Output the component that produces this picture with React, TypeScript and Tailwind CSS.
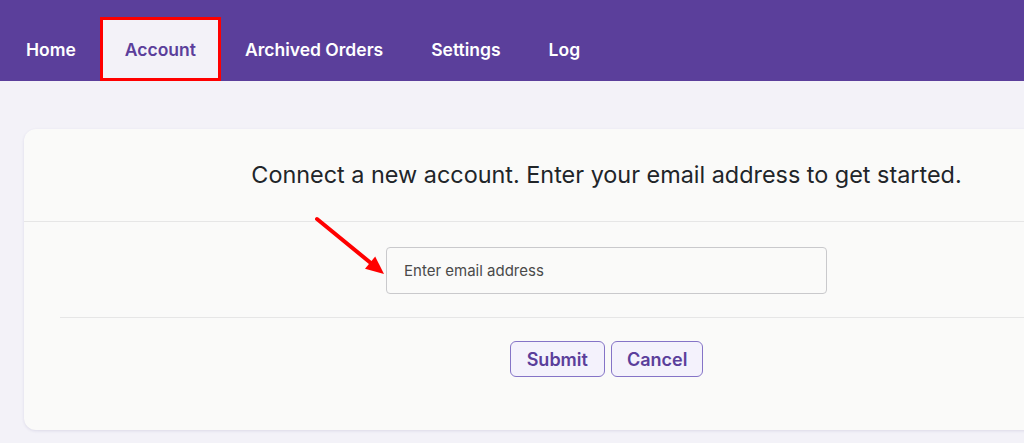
import React from "react";

const tabs = ["Home", "Account", "Archived Orders", "Settings", "Log"];

const App = () => {
  const active = "Account";

  return (
    <div className="relative w-[1024px] h-[443px] overflow-hidden bg-[#f3f2f8] font-['Inter',sans-serif]">
      {/* top navigation */}
      <div className="h-[81px] bg-[#5b3f9b] flex items-end pl-[2px]">
        {tabs.map((t) => (
          <div
            key={t}
            className={
              t === active
                ? "h-[64px] px-[22px] pt-[2px] flex items-center bg-[#f3f2f8] text-[#5b3f9b] border-[3px] border-[#ff0000] text-[17.5px] font-semibold"
                : "h-[64px] px-6 pt-[2px] flex items-center text-white text-[17.5px] font-semibold"
            }
          >
            {t}
          </div>
        ))}
      </div>

      {/* card */}
      <div className="mt-[48px] ml-[24px] w-[1165px] h-[301px] rounded-xl bg-[#fafaf9] shadow-[0_1px_3px_rgba(60,50,120,0.12)] flex flex-col">
        <div className="h-[93px] border-b border-[#e6e6e6] flex items-center justify-center">
          <h2 className="text-[23.4px] text-[#212529] font-normal">
            Connect a new account. Enter your email address to get started.
          </h2>
        </div>

        <div className="mx-[36px] pt-[25px] pb-[23px] border-b border-[#e6e6e6] flex justify-center">
          <input
            type="email"
            placeholder="Enter email address"
            className="w-[441px] h-[47px] rounded-[4px] border border-[#c9c9cc] bg-[#fafaf9] px-[17px] text-[15px] text-[#444] placeholder:text-[#4a4a4a] outline-none"
          />
        </div>

        <div className="pt-[23px] flex justify-center gap-[6px]">
          <button className="h-[36px] px-[16px] rounded-md border border-[#8574c7] bg-[#f4f2fc] text-[#5b3f9b] text-[18px] font-semibold">
            Submit
          </button>
          <button className="h-[36px] px-[15px] rounded-md border border-[#8574c7] bg-[#f4f2fc] text-[#5b3f9b] text-[18px] font-semibold">
            Cancel
          </button>
        </div>
      </div>

      {/* annotation arrow */}
      <svg className="absolute left-[310px] top-[212px]" width="80" height="70" viewBox="0 0 80 70">
        <line x1="7" y1="7" x2="62" y2="52" stroke="#ff0000" strokeWidth="4" strokeLinecap="round" />
        <polygon points="74,62 65.2,44.4 55,56.8" fill="#ff0000" />
      </svg>
    </div>
  );
};

export default App;
